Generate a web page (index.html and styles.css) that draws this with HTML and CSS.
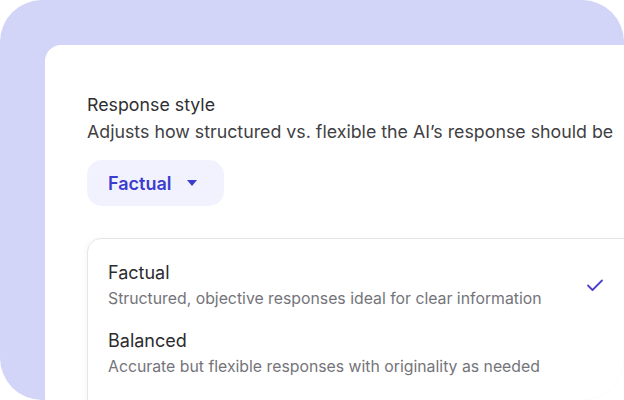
FILE: index.html
```html
<!DOCTYPE html>
<html>
<head>
<meta charset="utf-8">
<link rel="stylesheet" href="styles.css">
</head>
<body>
<div class="frame">
  <div class="card">
    <div class="label">Response style</div>
    <div class="hint">Adjusts how structured vs. flexible the AI’s response should be</div>
    <button class="select">Factual <span class="caret"></span></button>
    <div class="menu">
      <div class="option">
        <div class="option-text">
          <div class="option-title">Factual</div>
          <div class="option-desc">Structured, objective responses ideal for clear information</div>
        </div>
        <svg class="check" width="18" height="14" viewBox="0 0 18 14"><path d="M2 7.5 L6.5 12 L16 2.5" fill="none" stroke="#4b3fd0" stroke-width="1.8" stroke-linecap="round" stroke-linejoin="round"/></svg>
      </div>
      <div class="option">
        <div class="option-text">
          <div class="option-title">Balanced</div>
          <div class="option-desc">Accurate but flexible responses with originality as needed</div>
        </div>
      </div>
      <div class="option">
        <div class="option-text">
          <div class="option-title">Creative</div>
          <div class="option-desc">Imaginative responses with more freedom and variety</div>
        </div>
      </div>
    </div>
  </div>
</div>
</body>
</html>
```

FILE: styles.css
```css
* { box-sizing: border-box; }
html, body { margin: 0; padding: 0; background: #fff; }
body { width: 624px; height: 400px; overflow: hidden; font-family: Inter, "Liberation Sans", sans-serif; }
.frame {
  width: 624px;
  height: 400px;
  background: #d2d4f8;
  border-radius: 42px;
  padding: 45px 0 0 45px;
  overflow: hidden;
  display: flex;
}
.card {
  flex: 1;
  background: #fff;
  border-top-left-radius: 16px;
  padding: 46px 0 0 42px;
  overflow: hidden;
  min-width: 0;
}
.label { font-size: 17.8px; line-height: 27px; color: #2f2f33; }
.hint { font-size: 17.8px; line-height: 27px; color: #3f3f44; white-space: nowrap; }
.select {
  margin-top: 15px;
  display: flex;
  align-items: center;
  gap: 16px;
  height: 46px;
  width: 137px;
  padding: 0 0 0 21px;
  border: none;
  border-radius: 15px;
  background: #f1f2fd;
  color: #3b3dcf;
  font-family: inherit;
  font-size: 18px;
  font-weight: 600;
}
.caret {
  width: 0; height: 0;
  border-left: 5px solid transparent;
  border-right: 5px solid transparent;
  border-top: 6px solid #3b3dcf;
}
.menu {
  margin-top: 32px;
  width: 560px;
  border: 1px solid #e6e6ea;
  border-radius: 14px;
  box-shadow: 0 2px 8px rgba(0,0,0,0.05);
  padding: 12px 0 0 20px;
  background: #fff;
}
.option { display: flex; align-items: center; height: 68px; padding-right: 42px; }
.option-text { flex: 1; }
.option-title { font-size: 18px; line-height: 26px; color: #2c2c30; }
.option-desc { font-size: 15.8px; line-height: 24px; color: #74747a; margin-top: 1px; }
.check { flex: none; margin-left: auto; }
```
